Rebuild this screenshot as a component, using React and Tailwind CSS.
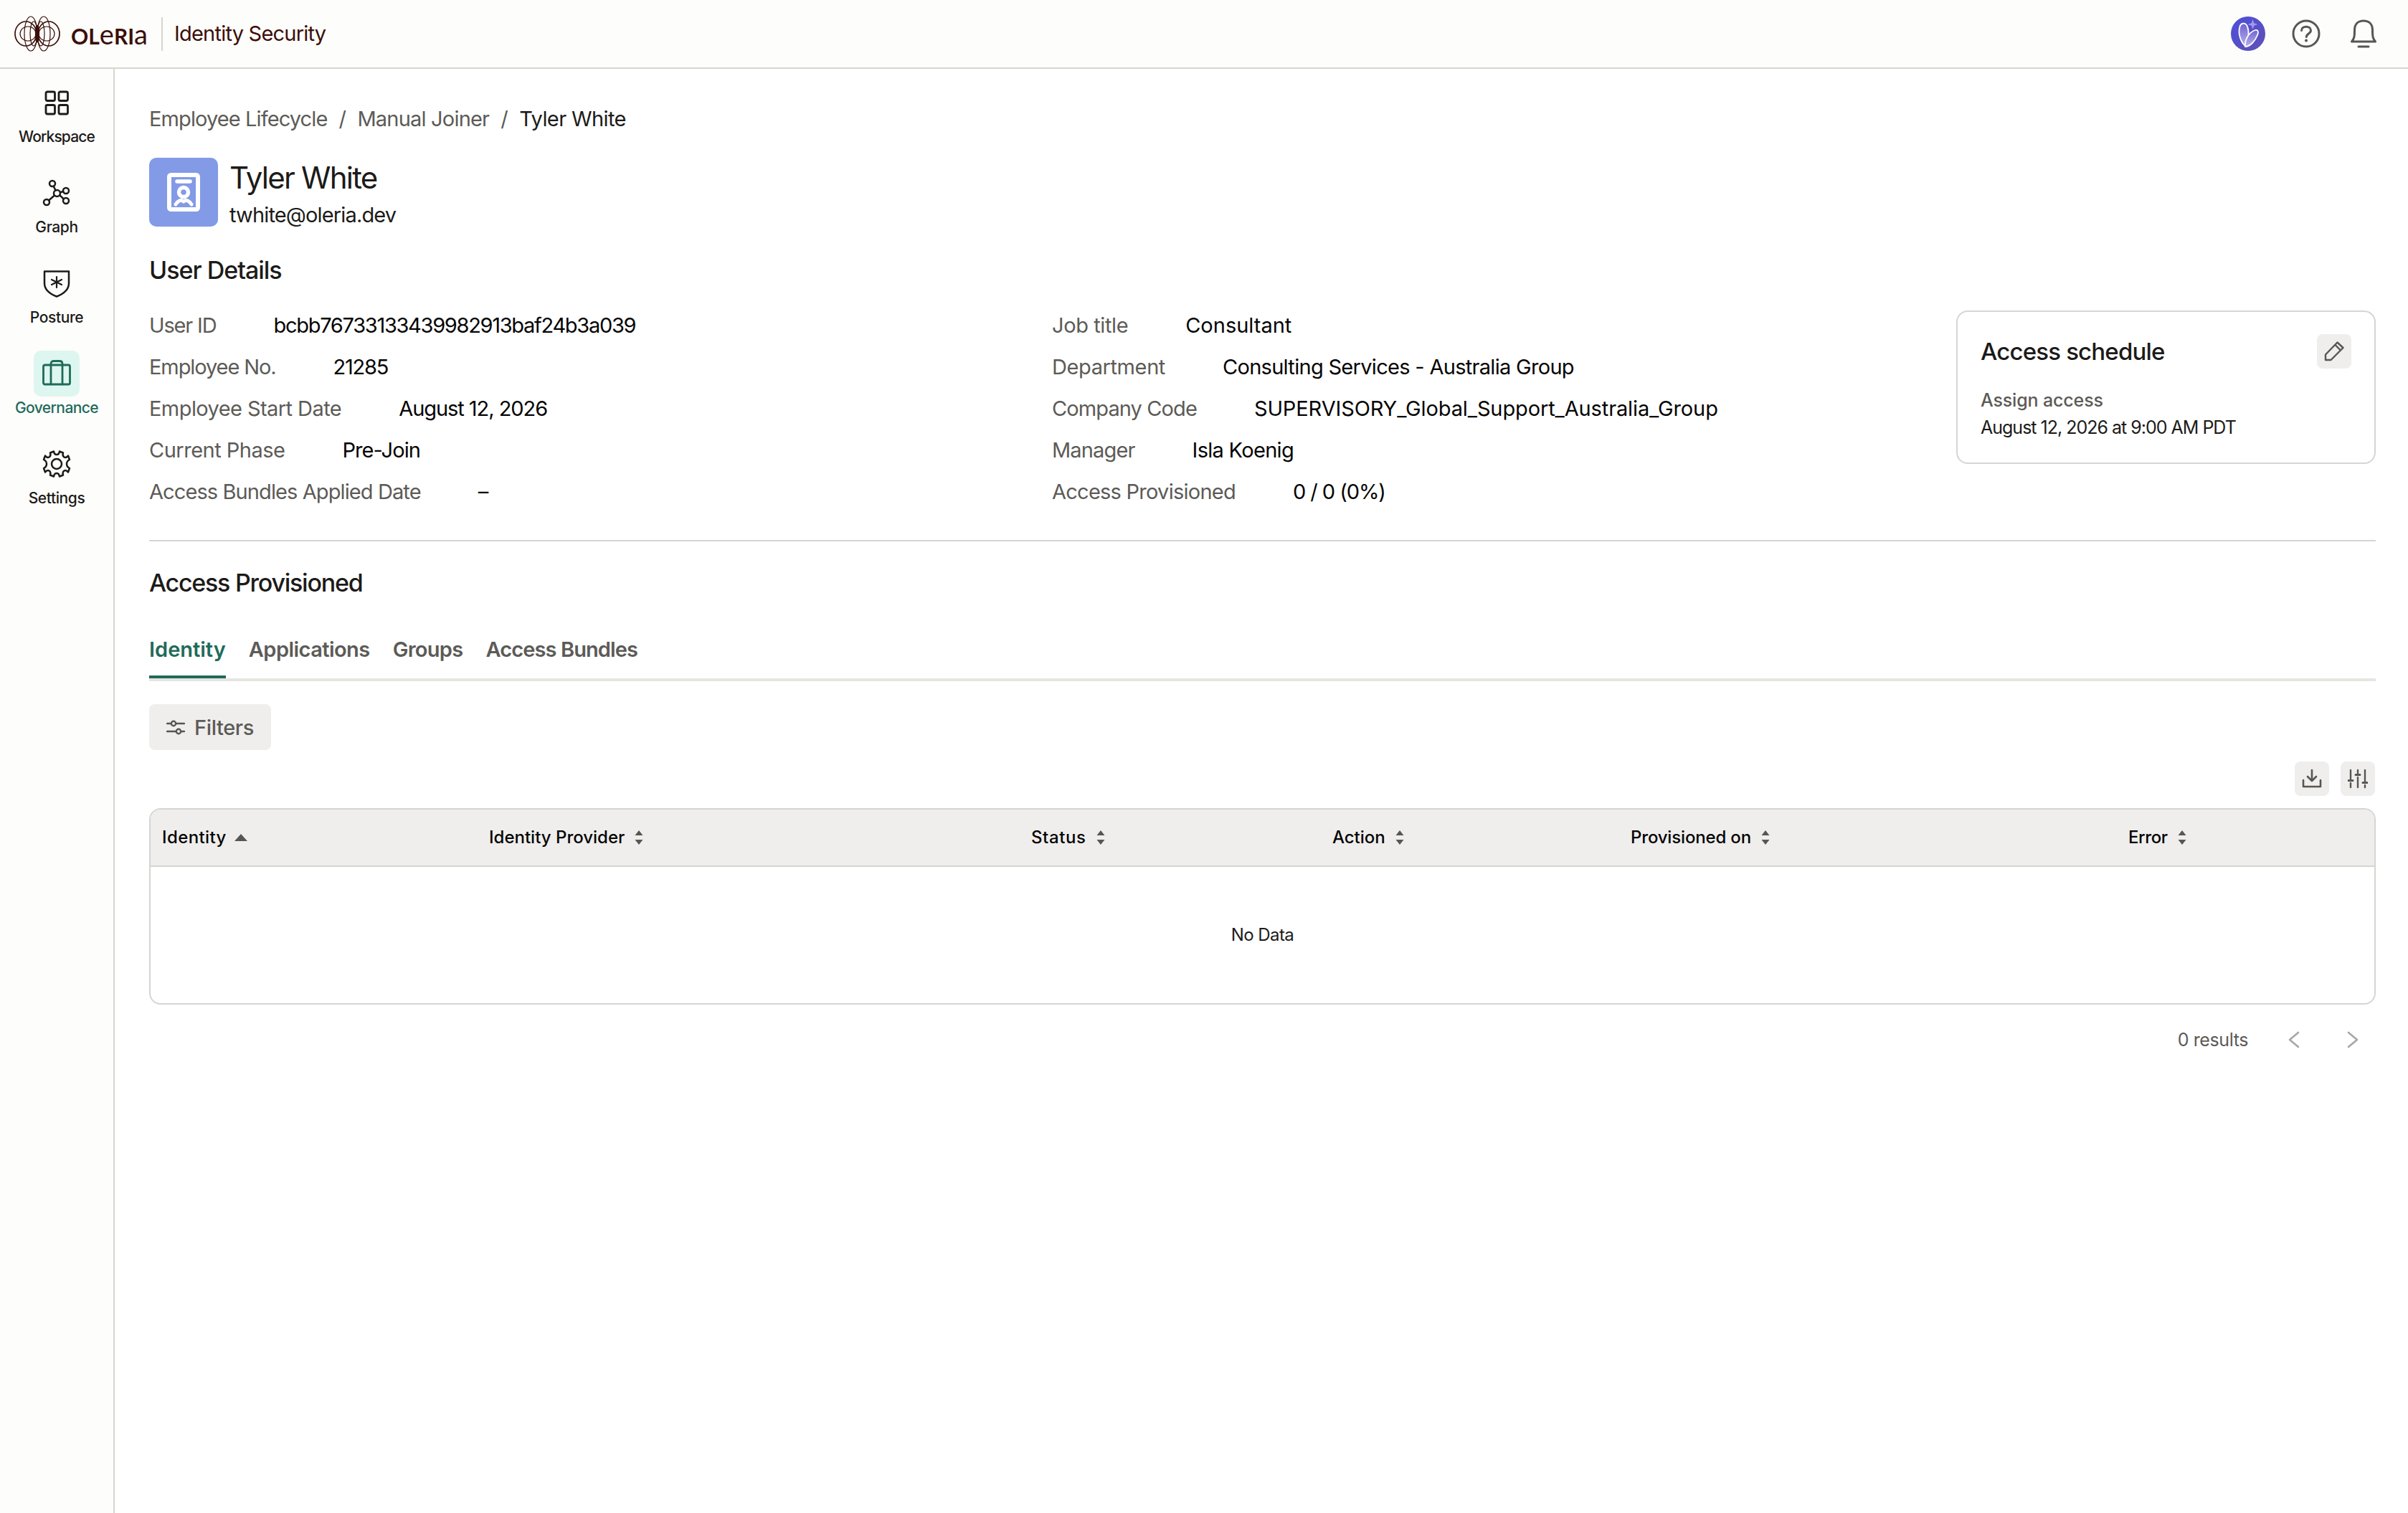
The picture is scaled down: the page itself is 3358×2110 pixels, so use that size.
import React from "react";

const Logo = () => (
  <svg width="64" height="50" viewBox="0 0 64 50" fill="none" stroke="#3b0f0a" strokeWidth="1.2">
    <ellipse cx="16" cy="25" rx="15" ry="17" strokeWidth="1.7" />
    <ellipse cx="48" cy="25" rx="15" ry="17" strokeWidth="1.7" />
    <ellipse cx="19" cy="25" rx="11" ry="10" />
    <ellipse cx="45" cy="25" rx="11" ry="10" />
    <ellipse cx="23" cy="25" rx="9" ry="24" />
    <ellipse cx="41" cy="25" rx="9" ry="24" />
    <ellipse cx="32" cy="25" rx="2.5" ry="12" fill="#3b0f0a" />
    <ellipse cx="27" cy="25" rx="5" ry="17" />
    <ellipse cx="37" cy="25" rx="5" ry="17" />
  </svg>
);

const Ai = () => (
  <svg width="48" height="48" viewBox="0 0 48 48" fill="none">
    <defs>
      <linearGradient id="aiBg" x1="0" y1="0" x2="1" y2="1">
        <stop offset="0" stopColor="#4c4fdc" />
        <stop offset="1" stopColor="#6150b4" />
      </linearGradient>
      <linearGradient id="aiLeaf" x1="0" y1="0" x2="0" y2="1">
        <stop offset="0" stopColor="#6f62d0" />
        <stop offset="1" stopColor="#b9b1ee" />
      </linearGradient>
    </defs>
    <circle cx="24" cy="24" r="24" fill="url(#aiBg)" />
    <path d="M30.5 4 L32.3 9.2 L37.5 11 L32.3 12.8 L30.5 18 L28.7 12.8 L23.5 11 L28.7 9.2 Z" fill="#a09ae8" />
    <path d="M20 41 C14 36 10 25 12 16 C13 9 20 7 23 14 C26 22 25 33 20 41 Z" fill="url(#aiLeaf)" stroke="#fff" strokeWidth="1.8" />
    <path d="M20 42 C19 33 25 22 34 19 C38 18 39 22 37 26 C34 34 27 42 20 42 Z" fill="url(#aiLeaf)" stroke="#fff" strokeWidth="1.8" />
  </svg>
);

const Help = () => (
  <svg width="40" height="40" viewBox="0 0 40 40" fill="none" stroke="#575652" strokeWidth="3" strokeLinecap="round">
    <circle cx="20" cy="20" r="18" />
    <path d="M13.5 15.5 C13.5 8.5 26.5 8.5 26.5 15.5 C26.5 20 20.3 20 20.3 24.5" />
    <circle cx="20" cy="29.5" r="1.4" fill="#575652" stroke="#575652" strokeWidth="1.2" />
  </svg>
);

const Bell = () => (
  <svg width="38" height="40" viewBox="0 0 38 40" fill="none" stroke="#575652" strokeWidth="3" strokeLinecap="round" strokeLinejoin="round">
    <path d="M2.5 31 C6 27 6.5 24 6.5 15 C6.5 6 12 2 19 2 C26 2 31.5 6 31.5 15 C31.5 24 32 27 35.5 31 Z" />
    <path d="M12 38 H26" />
  </svg>
);

const Stroke = ({ children, size = 40, color = "#1c1b19", sw = 2.5 }) => (
  <svg width={size} height={size} viewBox="0 0 40 40" fill="none" stroke={color} strokeWidth={sw} strokeLinecap="round" strokeLinejoin="round">
    {children}
  </svg>
);

const Workspace = () => (
  <Stroke sw={2.8}>
    <rect x="5" y="5" width="12.5" height="12.5" rx="2" />
    <rect x="23" y="5" width="12.5" height="12.5" rx="2" />
    <rect x="5" y="23.5" width="12.5" height="12.5" rx="2" />
    <rect x="23" y="23.5" width="12.5" height="12.5" rx="2" />
  </Stroke>
);

const Graph = () => (
  <Stroke>
    <circle cx="14" cy="7" r="4" />
    <circle cx="33" cy="17" r="4" />
    <circle cx="20.5" cy="20.5" r="4.5" />
    <circle cx="6" cy="33" r="4" />
    <circle cx="33" cy="31" r="4" />
    <path d="M15.7 10.7 L18.5 16.5 M25 19.2 L29.2 18 M17 23.5 L9 30.5 M24.2 23.2 L29.8 28.5" />
  </Stroke>
);

const Posture = () => (
  <Stroke>
    <path d="M3 3.5 H37 V20 C37 29 29 35 20 38.5 C11 35 3 29 3 20 Z" />
    <path d="M20 11 V26 M13 15 L27 22 M27 15 L13 22" strokeWidth="2.2" />
  </Stroke>
);

const Briefcase = () => (
  <Stroke color="#1f6b5a" sw={2.8}>
    <rect x="1.5" y="8" width="37" height="27" rx="2" />
    <path d="M12 35 V6.5 C12 4 13.5 2.5 16 2.5 H24 C26.5 2.5 28 4 28 6.5 V35" />
  </Stroke>
);

const Gear = () => (
  <Stroke>
    <circle cx="20" cy="20" r="7" />
    <path d="M16 2.5 C16.5 6 18 7 20 7 C22 7 23.5 6 24 2.5 L29 4.5 C28 8 29 9.5 30.5 10.5 C32 11.5 34 11 36 8.5 L38 14 C35 15.5 34 17.5 34 20 C34 22.5 35 24.5 38 26 L36 31.5 C34 29 32 28.5 30.5 29.5 C29 30.5 28 32 29 35.5 L24 37.5 C23.5 34 22 33 20 33 C18 33 16.5 34 16 37.5 L11 35.5 C12 32 11 30.5 9.5 29.5 C8 28.5 6 29 4 31.5 L2 26 C5 24.5 6 22.5 6 20 C6 17.5 5 15.5 2 14 L4 8.5 C6 11 8 11.5 9.5 10.5 C11 9.5 12 8 11 4.5 Z" />
  </Stroke>
);

const Badge = () => (
  <svg width="46" height="54" viewBox="0 0 46 54" fill="none">
    <rect x="3" y="3" width="40" height="48" rx="2.5" stroke="#fff" strokeWidth="6" />
    <path d="M14 12 H32" stroke="#fff" strokeWidth="5.5" strokeLinecap="round" />
    <circle cx="23" cy="27" r="6.5" stroke="#fff" strokeWidth="5.5" />
    <path d="M12 44 C15 39 19 37 23 40 C27 37 31 39 34 44" stroke="#fff" strokeWidth="5" strokeLinecap="round" strokeLinejoin="round" />
  </svg>
);

const Pencil = () => (
  <svg width="28" height="28" viewBox="0 0 28 28" fill="none" stroke="#575652" strokeWidth="2.4" strokeLinejoin="round">
    <path d="M2 26 V18.5 L18.5 1.5 L26.5 9 L9.5 26 Z" />
    <path d="M15.5 5 L23 12.5" />
  </svg>
);

const FilterIcon = () => (
  <svg width="26" height="24" viewBox="0 0 26 24" fill="none" stroke="#575652" strokeWidth="2.4" strokeLinecap="round">
    <path d="M1 6 H6 M14 6 H25 M1 17 H13 M21 17 H25" />
    <circle cx="10" cy="6" r="3.2" />
    <circle cx="17" cy="17" r="3.2" />
  </svg>
);

const Download = () => (
  <svg width="28" height="28" viewBox="0 0 28 28" fill="none" stroke="#575652" strokeWidth="2.6" strokeLinecap="round" strokeLinejoin="round">
    <path d="M14 2 V16 M8 11 L14 17 L20 11" />
    <path d="M2 16 V25 H26 V16" />
  </svg>
);

const Columns = () => (
  <svg width="28" height="28" viewBox="0 0 28 28" fill="none" stroke="#575652" strokeWidth="2.4" strokeLinecap="round">
    <path d="M4 2 V14 M4 20 V26 M14 2 V6 M14 12 V26 M24 2 V17 M24 23 V26" />
    <path d="M1 16.5 H7 M11 8.5 H17 M21 19.5 H27" strokeWidth="3" />
  </svg>
);

const SortBoth = () => (
  <svg width="12" height="22" viewBox="0 0 12 22" fill="#575652">
    <path d="M6 1 L11.5 8 H0.5 Z M6 21 L0.5 14 H11.5 Z" />
  </svg>
);

const SortUp = () => (
  <svg width="18" height="10" viewBox="0 0 18 10" fill="#575652" className="-ml-[3px]">
    <path d="M9 0 L18 10 H0 Z" />
  </svg>
);

const Chevron = ({ flip }) => (
  <svg width="16" height="24" viewBox="0 0 16 24" fill="none" stroke="#a8a7a2" strokeWidth="2.6" strokeLinecap="round" strokeLinejoin="round">
    <path d={flip ? "M2 2 L14 12 L2 22" : "M14 2 L2 12 L14 22"} />
  </svg>
);

const NavItem = ({ icon, label, active, track = "" }) => (
  <div className="flex flex-col items-center">
    <div className={`flex h-16 w-16 items-center justify-center rounded-[10px] ${active ? "bg-[#def6f0]" : ""}`}>{icon}</div>
    <div className={`h-8 text-[21px] leading-8 font-medium ${track} ${active ? "text-[#1f6b5a]" : "text-[#1c1b19]"}`}>{label}</div>
  </div>
);

const Row = ({ label, value, lt, vt }) => (
  <div className="flex h-10 items-center gap-20 text-[29px] leading-10">
    <span className={`text-[#5c5b57] ${lt}`}>{label}</span>
    <span className={`text-[#050505] ${vt}`}>{value}</span>
  </div>
);

const columns = [
  { label: "Identity", w: "w-[456px]", t: "tracking-[0.4px]", icon: <SortUp /> },
  { label: "Identity Provider", w: "w-[756px]", t: "tracking-[0px]", icon: <SortBoth /> },
  { label: "Status", w: "w-[420px]", t: "tracking-[0.6px]", icon: <SortBoth /> },
  { label: "Action", w: "w-[416px]", t: "tracking-[-0.05px]", icon: <SortBoth /> },
  { label: "Provisioned on", w: "w-[694px]", t: "tracking-[-0.17px]", icon: <SortBoth /> },
  { label: "Error", w: "w-[300px]", t: "tracking-[-0.4px]", icon: <SortBoth /> },
];

export default function App() {
  return (
    <div className="flex min-h-[2110px] flex-col bg-white font-['Inter',sans-serif] tracking-[-0.4px]">
      <header className="flex h-[96px] items-center justify-between border-b-2 border-[#d6d5d1] bg-[#fdfdfb] pr-[43px] pl-[20px]">
        <div className="flex items-center">
          <Logo />
          <span className="ml-[15px] font-['Lato',sans-serif] text-[30px] leading-none font-bold tracking-[0px] text-[#3b0f0a]">
            OL<span className="text-[38px] font-normal">e</span>RI<span className="text-[38px] font-normal">a</span>
          </span>
          <div className="mr-[16px] ml-[19px] h-[47px] w-[2px] bg-[#d6d5d1]" />
          <span className="text-[29px] tracking-[-0.78px] text-[#3b0f0a]">Identity Security</span>
        </div>
        <div className="flex items-center">
          <Ai />
          <div className="mr-[41px] ml-[37px]"><Help /></div>
          <Bell />
        </div>
      </header>
      <div className="flex flex-1">
        <aside className="flex w-[160px] shrink-0 flex-col items-center gap-[30px] border-r-2 border-[#d6d5d1] bg-[#fdfdfb] pt-[15px]">
          <NavItem icon={<Workspace />} label="Workspace" track="tracking-[-0.87px]" />
          <NavItem icon={<Graph />} label="Graph" />
          <NavItem icon={<Posture />} label="Posture" />
          <NavItem icon={<Briefcase />} label="Governance" active track="tracking-[-0.6px]" />
          <NavItem icon={<Gear />} label="Settings" />
        </aside>
        <main className="min-w-0 flex-1 pt-[50px] pr-[45px] pl-[48px]">
          <div className="flex h-10 items-center text-[29px] text-[#5c5b57]">
            <span className="tracking-[-0.9px]">Employee Lifecycle</span>
            <span className="mx-[16px]">/</span>
            <span className="tracking-[-0.8px]">Manual Joiner</span>
            <span className="mx-[16px]">/</span>
            <span className="tracking-[-0.6px] text-[#1c1b19]">Tyler White</span>
          </div>
          <div className="mt-[34px] flex h-[96px] items-start gap-[16px]">
            <div className="flex h-[96px] w-[96px] shrink-0 items-center justify-center rounded-[10px] bg-[#839ae6]"><Badge /></div>
            <div>
              <div className="mt-[2px] text-[42px] leading-[52px] tracking-[-1.76px] text-[#1c1b19]">Tyler White</div>
              <div className="mt-[6px] text-[29px] leading-10 tracking-[-0.85px] text-[#1c1b19]">twhite@oleria.dev</div>
            </div>
          </div>
          <h2 className="mt-[39px] text-[34px] leading-[44px] font-medium tracking-[-1px] text-[#1c1b19]">User Details</h2>
          <div className="mt-[35px] flex items-start">
            <div className="flex w-[1259px] flex-col gap-[18px]">
              <Row label="User ID" value="bcbb76733133439982913baf24b3a039" lt="tracking-[-1.15px]" vt="tracking-[-1.3px]" />
              <Row label="Employee No." value="21285" lt="tracking-[-1.1px]" vt="tracking-[-1.25px]" />
              <Row label="Employee Start Date" value="August 12, 2026" lt="tracking-[-0.57px]" vt="tracking-[-1.05px]" />
              <Row label="Current Phase" value="Pre-Join" lt="tracking-[-0.5px]" vt="tracking-[-0.95px]" />
              <Row label="Access Bundles Applied Date" value="–" lt="tracking-[-0.9px]" vt="tracking-[0px]" />
            </div>
            <div className="flex w-[1261px] flex-col gap-[18px]">
              <Row label="Job title" value="Consultant" lt="tracking-[-0.4px]" vt="tracking-[0px]" />
              <Row label="Department" value="Consulting Services - Australia Group" lt="tracking-[-0.4px]" vt="tracking-[-0.7px]" />
              <Row label="Company Code" value="SUPERVISORY_Global_Support_Australia_Group" lt="tracking-[-0.9px]" vt="tracking-[-0.12px]" />
              <Row label="Manager" value="Isla Koenig" lt="tracking-[-0.85px]" vt="tracking-[-0.7px]" />
              <Row label="Access Provisioned" value="0 / 0 (0%)" lt="tracking-[-0.75px]" vt="tracking-[-1.05px]" />
            </div>
            <div className="-mt-px h-[214px] flex-1 rounded-[16px] border-2 border-[#d6d5d1] pt-[31px] pr-[32px] pl-[32px]">
              <div className="flex items-center justify-between">
                <span className="text-[33px] leading-[48px] font-medium tracking-[-0.83px] text-[#1c1b19]">Access schedule</span>
                <div className="flex h-12 w-12 items-center justify-center rounded-[8px] bg-[#efeeec]"><Pencil /></div>
              </div>
              <div className="mt-[25px] text-[25px] leading-[38px] font-medium tracking-[-0.15px] text-[#5c5b57]">Assign access</div>
              <div className="text-[25px] leading-[38px] tracking-[-1px] text-[#1c1b19]">August 12, 2026 at 9:00 AM PDT</div>
            </div>
          </div>
          <div className="mt-[47px] h-[2px] bg-[#d6d5d1]" />
          <h2 className="mt-[36px] text-[34px] leading-[44px] font-medium tracking-[-1.25px] text-[#1c1b19]">Access Provisioned</h2>
          <div className="mt-[51px] flex h-[64px] gap-[32px] border-b-[4px] border-[#e6e5e2] text-[29px] leading-10 font-semibold text-[#5c5b57]">
            <div className="-mb-[4px] h-[60px] border-b-[4px] border-[#1f6b5a] tracking-[0px] text-[#1f6b5a]">Identity</div>
            <div className="tracking-[-0.55px]">Applications</div>
            <div className="tracking-[-0.7px]">Groups</div>
            <div className="tracking-[-0.9px]">Access Bundles</div>
          </div>
          <button className="mt-[32px] flex h-[64px] w-[170px] items-center justify-center gap-[13px] rounded-[8px] bg-[#efeeec] pt-px text-[29px] font-medium text-[#5c5b57]">
            <FilterIcon />
            Filters
          </button>
          <div className="mt-[16px] flex justify-end gap-[16px] pr-px">
            <div className="flex h-12 w-12 items-center justify-center rounded-[8px] bg-[#efeeec]"><Download /></div>
            <div className="flex h-12 w-12 items-center justify-center rounded-[8px] bg-[#efeeec]"><Columns /></div>
          </div>
          <div className="mt-[17px] h-[274px] overflow-hidden rounded-[16px] border-2 border-[#d6d5d1]">
            <div className="flex h-[80px] items-center border-b-2 border-[#d6d5d1] bg-[#efeeec] pl-[16px] text-[24px] font-medium text-[#050505]">
              {columns.map((c) => (
                <div key={c.label} className={`flex shrink-0 items-center gap-[14px] ${c.w} ${c.t}`}>
                  {c.label}
                  {c.icon}
                </div>
              ))}
            </div>
            <div className="flex h-[190px] items-center justify-center text-[24px] tracking-[-0.6px] text-[#1c1b19]">No Data</div>
          </div>
          <div className="mt-[29px] flex items-center justify-end pr-[24px]">
            <span className="text-[25px] leading-[40px] text-[#5c5b57]">0 results</span>
            <div className="ml-[56px]"><Chevron /></div>
            <div className="ml-[66px]"><Chevron flip /></div>
          </div>
        </main>
      </div>
    </div>
  );
}
